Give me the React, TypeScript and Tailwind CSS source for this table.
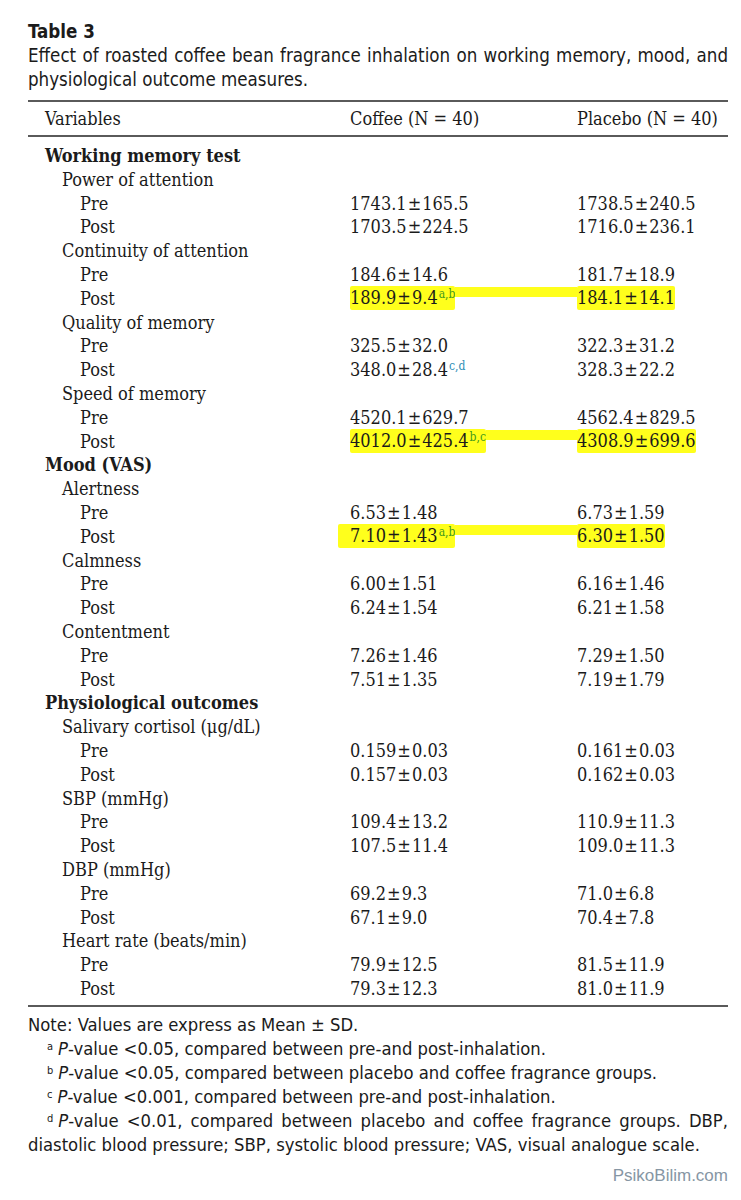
const serif = "font-['DejaVu_Serif_Condensed','DejaVu_Serif',serif]";
const narrow = "font-['Liberation_Sans_Narrow','DejaVu_Sans_Condensed','Liberation_Sans',sans-serif]";

type Row = {
  label: string;
  level: 0 | 1 | 2;
  c?: string;
  p?: string;
  sup?: string;
  supColor?: string;
  hl?: boolean;
  hlWide?: boolean;
};

const green = "text-[#3f9a1c]";
const teal = "text-[#2b8db5]";

const rows: Row[] = [
  { label: "Working memory test", level: 0 },
  { label: "Power of attention", level: 1 },
  { label: "Pre", level: 2, c: "1743.1 ± 165.5", p: "1738.5 ± 240.5" },
  { label: "Post", level: 2, c: "1703.5 ± 224.5", p: "1716.0 ± 236.1" },
  { label: "Continuity of attention", level: 1 },
  { label: "Pre", level: 2, c: "184.6 ± 14.6", p: "181.7 ± 18.9" },
  { label: "Post", level: 2, c: "189.9 ± 9.4", p: "184.1 ± 14.1", sup: "a,b", supColor: green, hl: true },
  { label: "Quality of memory", level: 1 },
  { label: "Pre", level: 2, c: "325.5 ± 32.0", p: "322.3 ± 31.2" },
  { label: "Post", level: 2, c: "348.0 ± 28.4", p: "328.3 ± 22.2", sup: "c,d", supColor: teal },
  { label: "Speed of memory", level: 1 },
  { label: "Pre", level: 2, c: "4520.1 ± 629.7", p: "4562.4 ± 829.5" },
  { label: "Post", level: 2, c: "4012.0 ± 425.4", p: "4308.9 ± 699.6", sup: "b,c", supColor: green, hl: true },
  { label: "Mood (VAS)", level: 0 },
  { label: "Alertness", level: 1 },
  { label: "Pre", level: 2, c: "6.53 ± 1.48", p: "6.73 ± 1.59" },
  { label: "Post", level: 2, c: "7.10 ± 1.43", p: "6.30 ± 1.50", sup: "a,b", supColor: green, hl: true, hlWide: true },
  { label: "Calmness", level: 1 },
  { label: "Pre", level: 2, c: "6.00 ± 1.51", p: "6.16 ± 1.46" },
  { label: "Post", level: 2, c: "6.24 ± 1.54", p: "6.21 ± 1.58" },
  { label: "Contentment", level: 1 },
  { label: "Pre", level: 2, c: "7.26 ± 1.46", p: "7.29 ± 1.50" },
  { label: "Post", level: 2, c: "7.51 ± 1.35", p: "7.19 ± 1.79" },
  { label: "Physiological outcomes", level: 0 },
  { label: "Salivary cortisol (μg/dL)", level: 1 },
  { label: "Pre", level: 2, c: "0.159 ± 0.03", p: "0.161 ± 0.03" },
  { label: "Post", level: 2, c: "0.157 ± 0.03", p: "0.162 ± 0.03" },
  { label: "SBP (mmHg)", level: 1 },
  { label: "Pre", level: 2, c: "109.4 ± 13.2", p: "110.9 ± 11.3" },
  { label: "Post", level: 2, c: "107.5 ± 11.4", p: "109.0 ± 11.3" },
  { label: "DBP (mmHg)", level: 1 },
  { label: "Pre", level: 2, c: "69.2 ± 9.3", p: "71.0 ± 6.8" },
  { label: "Post", level: 2, c: "67.1 ± 9.0", p: "70.4 ± 7.8" },
  { label: "Heart rate (beats/min)", level: 1 },
  { label: "Pre", level: 2, c: "79.9 ± 12.5", p: "81.5 ± 11.9" },
  { label: "Post", level: 2, c: "79.3 ± 12.3", p: "81.0 ± 11.9" },
];

const indent = ["pl-[17px] font-bold", "pl-[34px]", "pl-[52px]"];

function Value({ text }: { text: string }) {
  const [a, b] = text.split(" ± ");
  return (
    <>
      {a}
      <span className="px-[1px]">±</span>
      {b}
    </>
  );
}

function TableRow({ r }: { r: Row }) {
  return (
    <div className="grid grid-cols-[322px_227px_1fr] h-[23.8px] items-center">
      <div className={indent[r.level]}>{r.label}</div>
      <div className="flex items-center h-full">
        {r.c && (
          <span
            className={
              r.hl
                ? `bg-[#ffff1c] rounded-[2px] leading-[24px] ${r.hlWide ? "-ml-[12px] pl-[12px]" : ""}`
                : ""
            }
          >
            <Value text={r.c} />
            {r.sup && (
              <span className={`text-[12px] leading-none align-[6px] ${r.supColor} ml-[1px]`}>{r.sup}</span>
            )}
          </span>
        )}
        {r.hl && <div className="flex-1 h-[10px] bg-[#ffff1c] self-start mt-[2px]" />}
      </div>
      <div className="flex items-center h-full">
        {r.p && (
          <span className={r.hl ? "bg-[#ffff1c] rounded-[2px] leading-[24px]" : ""}>
            <Value text={r.p} />
          </span>
        )}
      </div>
    </div>
  );
}

function Foot({ mark, children }: { mark: string; children: React.ReactNode }) {
  return (
    <p className="indent-[19px] text-justify">
      <span className="text-[11px] leading-none align-[5px] mr-[5px]">{mark}</span>
      {children}
    </p>
  );
}

export default function App() {
  return (
    <div className="w-[741px] h-[1200px] bg-white text-[#1b1b1b] pl-[28px] pr-[13px] pt-[20px]">
      <div className={`${narrow} text-[18.6px] leading-[24px]`}>
        <div className="font-bold">Table 3</div>
        <p className="text-justify">
          Effect of roasted coffee bean fragrance inhalation on working memory, mood, and physiological outcome
          measures.
        </p>
      </div>

      <div className={`${serif} text-[18px] mt-[8px]`}>
        <div className="border-t-[2px] border-b-[2px] border-[#5a5a5a] h-[37px] grid grid-cols-[322px_227px_1fr] items-center">
          <div className="pl-[17px]">Variables</div>
          <div>Coffee (N = 40)</div>
          <div>Placebo (N = 40)</div>
        </div>
        <div className="pt-[5px] pb-[6px] border-b-[2px] border-[#5a5a5a]">
          {rows.map((r, i) => (
            <TableRow key={i} r={r} />
          ))}
        </div>
      </div>

      <div className={`${narrow} text-[18.3px] leading-[24px] mt-[6px]`}>
        <p>Note: Values are express as Mean ± SD.</p>
        <Foot mark="a">
          <i>P</i>-value &lt;0.05, compared between pre-and post-inhalation.
        </Foot>
        <Foot mark="b">
          <i>P</i>-value &lt;0.05, compared between placebo and coffee fragrance groups.
        </Foot>
        <Foot mark="c">
          <i>P</i>-value &lt;0.001, compared between pre-and post-inhalation.
        </Foot>
        <Foot mark="d">
          <i>P</i>-value &lt;0.01, compared between placebo and coffee fragrance groups. DBP, diastolic blood
          pressure; SBP, systolic blood pressure; VAS, visual analogue scale.
        </Foot>
      </div>

      <div className="text-right mt-[6px] font-['Liberation_Sans',sans-serif] text-[17px] text-[#8696a4]">
        PsikoBilim.com
      </div>
    </div>
  );
}
